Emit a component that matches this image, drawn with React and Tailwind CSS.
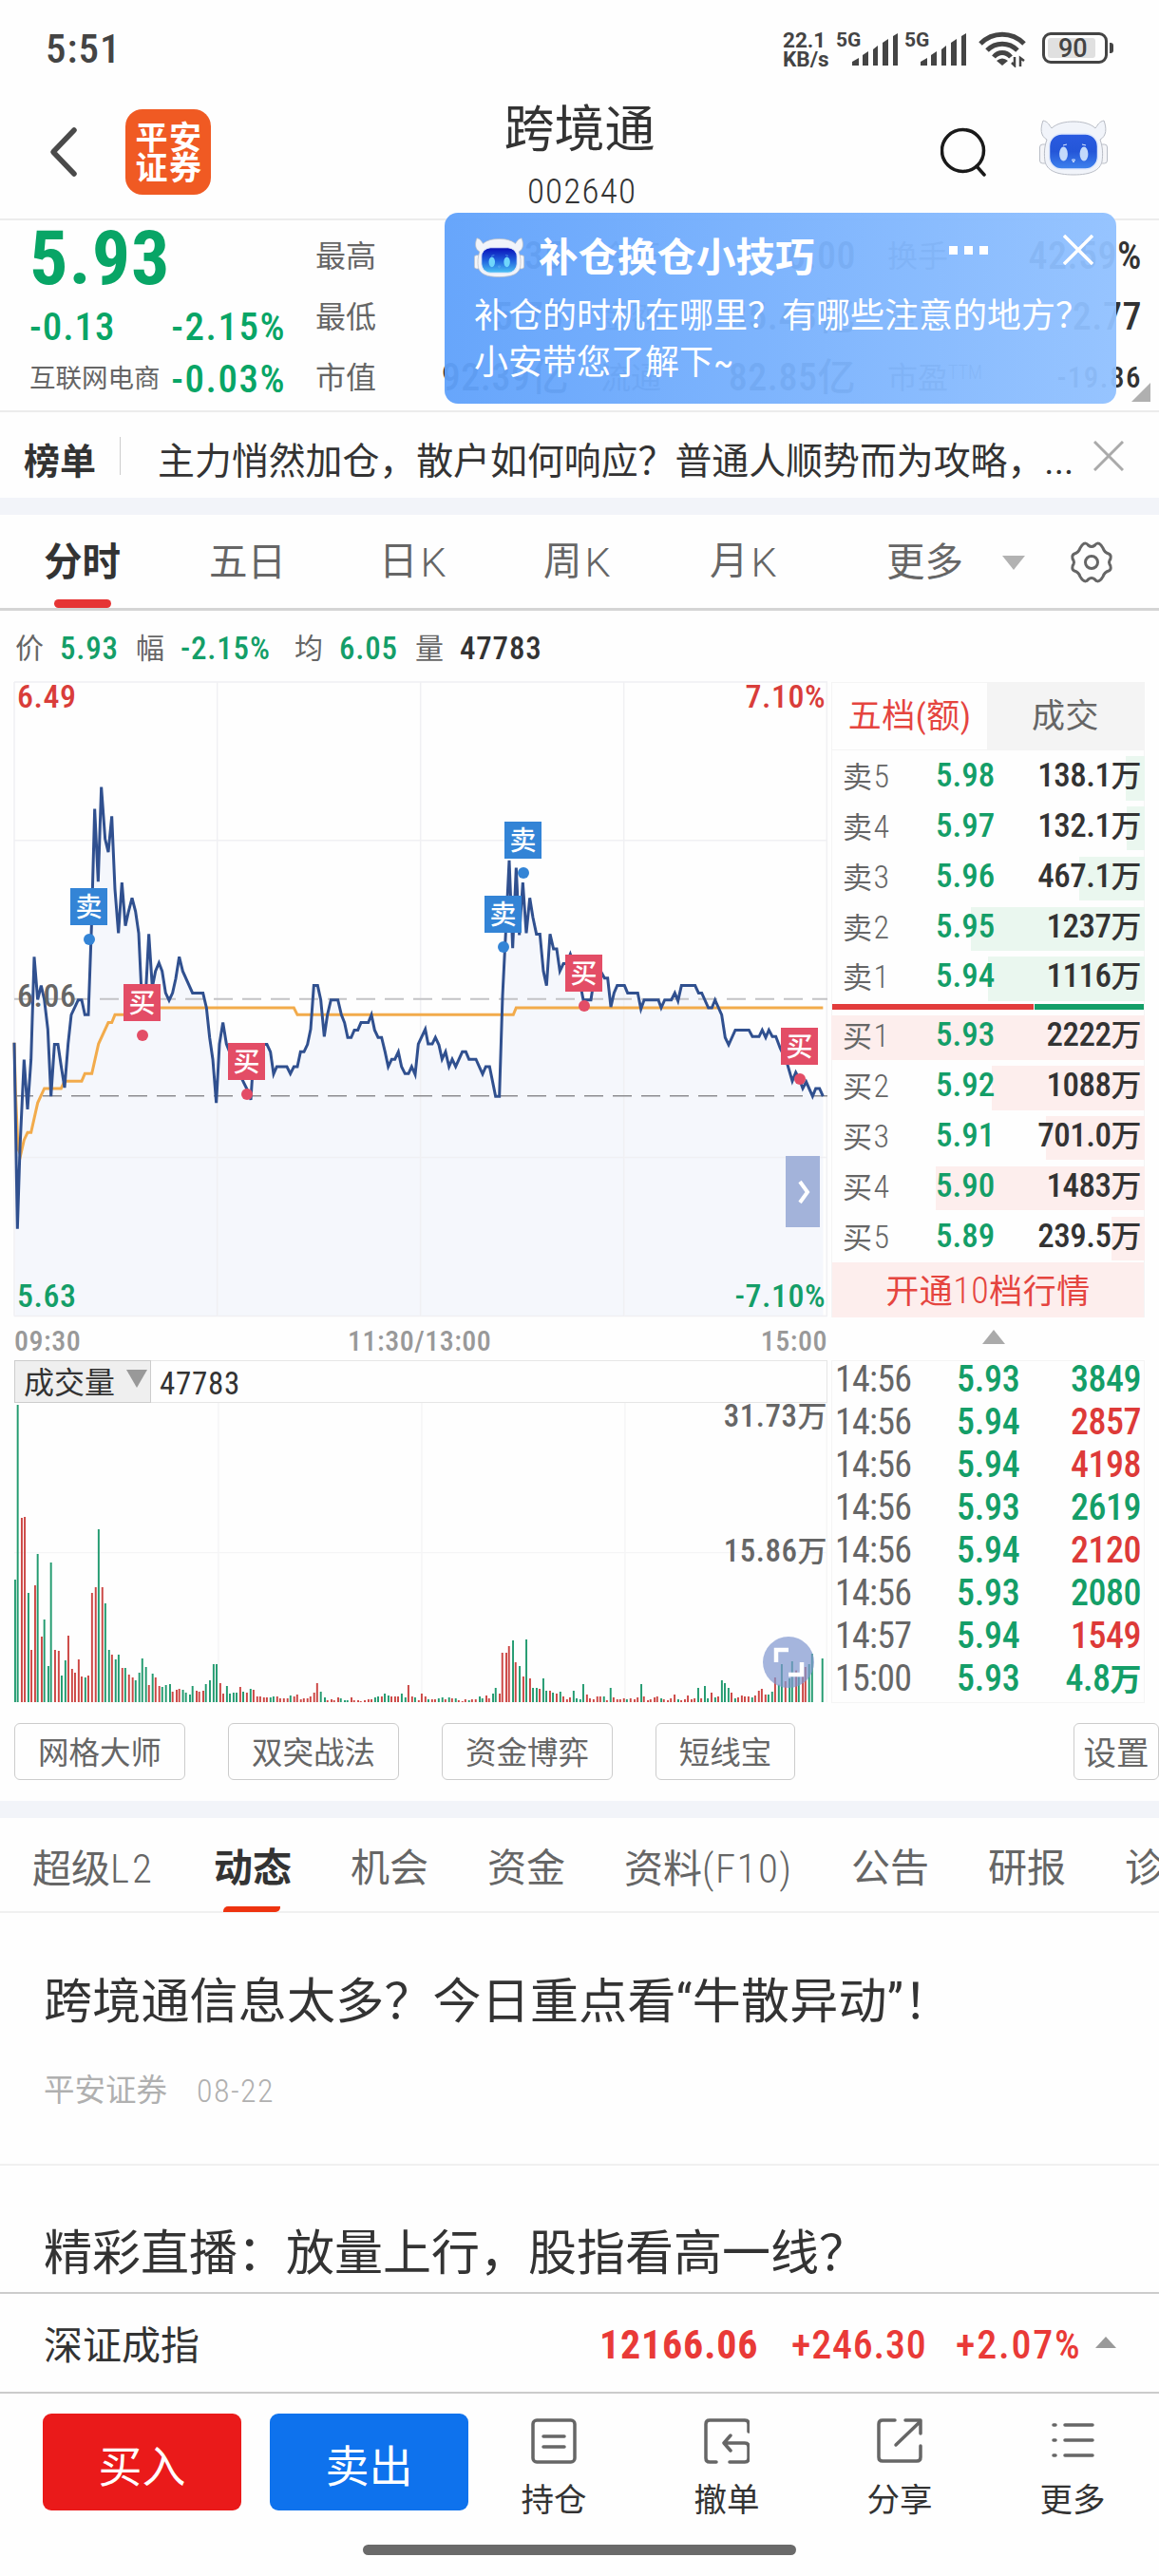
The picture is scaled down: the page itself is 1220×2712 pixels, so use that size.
const PRICE_LINE =
  '46,867 56,1294 64,1110 77,906 88,1020 99,905 109,670 120,768 131,736 141,768 152,836 162,990 173,871 184,871 194,920 205,970 216,870 226,803 248,769 259,769 269,803 280,803 290,600 300,331 311,498 321,281 333,400 343,430 354,348 364,515 375,616 386,500 397,599 407,566 418,535 429,566 439,616 449,770 460,770 471,618 482,740 492,703 503,684 513,703 524,753 535,770 546,753 556,720 567,670 578,703 609,753 642,753 653,787 663,855 673,905 684,1005 694,870 705,821 716,870 727,890 740,905 765,950 782,975 793,998 800,920 820,871 844,871 855,888 865,939 875,922 907,922 918,938 929,922 940,922 950,888 961,888 972,871 982,836 992,736 1004,736 1014,769 1025,853 1035,803 1046,769 1068,769 1079,803 1089,821 1099,855 1110,855 1120,838 1131,838 1141,821 1164,821 1174,803 1184,838 1195,855 1206,855 1217,888 1227,922 1238,905 1248,905 1259,888 1269,922 1280,938 1291,938 1301,922 1312,940 1322,870 1344,836 1353,870 1366,870 1376,855 1387,872 1397,905 1408,888 1419,922 1429,905 1440,922 1461,888 1472,888 1482,905 1504,905 1525,939 1535,922 1547,922 1566,990 1578,990 1588,760 1599,600 1609,449 1620,650 1631,466 1641,620 1652,500 1663,616 1674,535 1684,580 1695,618 1706,618 1717,703 1727,736 1738,618 1749,652 1759,652 1769,703 1780,686 1790,686 1802,664 1815,690 1830,720 1843,769 1867,769 1872,745 1885,700 1898,703 1910,719 1920,719 1930,785 1940,753 1950,736 1973,736 1983,753 2015,753 2025,790 2035,769 2080,769 2089,787 2100,769 2121,769 2132,753 2142,771 2153,736 2196,736 2207,753 2217,753 2238,787 2249,787 2259,769 2280,803 2291,855 2302,872 2323,838 2366,838 2377,853 2398,853 2408,838 2419,855 2429,838 2440,853 2451,853 2465,880 2485,910 2503,955 2514,935 2525,950 2536,972 2547,957 2567,990 2577,972 2589,972 2600,990'

const AVG_LINE =
  '46,867 50,980 58,1110 66,1125 77,1090 88,1073 99,1073 120,1005 141,972 194,972 205,955 259,955 269,938 291,938 312,870 343,821 354,821 364,803 395,803 500,787 929,787 940,803 1622,803 1631,787 2600,787'

// x height, g = down, r = up
const VOLUME =
  '41 387g,48 939g,59 582r,67 585r,77 345g,85 165r,95 369r,102 468g,113 207r,120 261g,131 114g,138 441g,149 165r,159 162r,167 84g,177 132g,185 210r,195 105r,203 93r,213 135r,221 81r,231 78g,239 84r,249 345r,259 363r,267 546g,277 363r,285 312g,295 165g,303 150r,313 135g,321 150g,331 108r,339 108g,349 87r,359 78r,367 69g,377 93g,385 138g,395 111g,403 54r,413 90g,421 78r,431 51r,439 48g,449 54g,460 57g,467 33r,478 39r,485 42r,495 39g,503 30g,514 24g,521 51g,532 36r,539 33r,550 36r,557 57g,568 69g,578 120g,586 120g,596 60r,604 27r,614 51g,622 27g,632 30g,640 30g,650 48r,658 33g,668 30r,678 42g,686 39r,696 18r,704 18r,714 15r,722 15r,732 15g,740 18g,750 18r,758 12r,768 12r,778 12r,786 21g,796 18r,804 24r,814 9r,822 12r,832 12r,840 18r,850 30r,858 60r,868 33g,879 15g,886 6r,897 9r,904 6r,915 15r,922 12g,933 6g,940 6g,951 15r,958 6r,969 6r,976 3r,987 6r,997 9r,1005 9r,1015 15g,1023 18g,1033 18r,1041 27g,1051 21g,1059 18r,1069 18r,1077 18r,1087 27g,1097 15g,1105 54r,1115 18r,1123 15g,1133 6r,1141 27r,1151 18r,1159 9g,1169 9r,1177 9r,1187 12g,1197 15g,1205 9r,1215 15g,1223 12r,1233 12g,1241 6r,1251 3r,1259 9r,1269 6g,1277 9r,1287 9r,1298 18g,1305 12g,1316 21r,1323 12r,1334 27g,1341 45g,1352 27r,1359 156r,1370 156r,1377 177r,1388 195g,1395 126r,1406 114g,1416 81r,1424 198g,1434 75r,1442 45g,1452 45g,1460 42r,1470 75g,1478 36g,1488 36r,1496 30g,1506 27r,1516 33g,1524 18r,1534 9r,1542 15r,1552 36g,1560 12g,1570 9g,1578 57g,1588 24r,1596 12r,1606 9r,1616 18r,1624 18r,1634 18g,1642 6r,1652 45g,1660 15r,1670 9r,1678 9r,1688 12r,1696 9g,1706 12r,1717 9r,1725 15r,1735 57g,1742 18r,1753 6r,1760 9r,1771 15r,1778 18r,1789 12g,1796 9r,1807 6r,1815 12r,1825 24r,1835 9g,1843 6r,1853 9r,1861 21r,1871 9r,1879 12r,1889 45g,1897 12r,1907 51g,1915 12g,1925 30r,1935 15g,1943 18r,1953 69g,1961 60g,1971 45g,1979 30r,1989 12g,1997 15r,2007 21r,2015 18r,2025 18r,2035 15g,2043 21r,2053 36r,2061 42r,2071 24r,2079 24g,2089 33g,2097 78r,2107 55g,2115 120g,2125 66r,2136 75g,2143 129g,2154 100r,2161 80g,2172 111r,2179 111r,2189 120g,2197 153g,2225 138g'

const bars = VOLUME.split(',').map((s) => {
  const [x, h] = s.split(' ')
  return { x: Number(x), h: parseInt(h, 10), up: h.endsWith('r') }
})

const trades = [
  { side: '卖', x: 59, y: 217 },
  { side: '买', x: 115, y: 318 },
  { side: '买', x: 225, y: 380 },
  { side: '卖', x: 495, y: 225 },
  { side: '卖', x: 516, y: 147 },
  { side: '买', x: 580, y: 287 },
  { side: '买', x: 807, y: 364 },
]

const asks = [
  ['卖5', '5.98', '138.1万', 20],
  ['卖4', '5.97', '132.1万', 19],
  ['卖3', '5.96', '467.1万', 69],
  ['卖2', '5.95', '1237万', 183],
  ['卖1', '5.94', '1116万', 165],
]

const bids = [
  ['买1', '5.93', '2222万', 330],
  ['买2', '5.92', '1088万', 161],
  ['买3', '5.91', '701.0万', 104],
  ['买4', '5.90', '1483万', 220],
  ['买5', '5.89', '239.5万', 35],
]

const ticks = [
  ['14:56', '5.93', '3849', 'g'],
  ['14:56', '5.94', '2857', 'r'],
  ['14:56', '5.94', '4198', 'r'],
  ['14:56', '5.93', '2619', 'g'],
  ['14:56', '5.94', '2120', 'r'],
  ['14:56', '5.93', '2080', 'g'],
  ['14:57', '5.94', '1549', 'r'],
  ['15:00', '5.93', '4.8万', 'g'],
]

function Robot({ className, dark }) {
  return (
    <svg viewBox="0 0 72 60" className={className} preserveAspectRatio="none">
      <defs>
        <linearGradient id={dark ? 'faceDark' : 'face'} x1="0" y1="0" x2="0" y2="1">
          <stop offset="0" stopColor={dark ? '#0a0fb8' : '#2a5be0'} />
          <stop offset="0.5" stopColor={dark ? '#1f5fdc' : '#2456d8'} />
          <stop offset="1" stopColor={dark ? '#4cc3f5' : '#3f83ee'} />
        </linearGradient>
      </defs>
      <rect x="0.5" y="26" width="8" height="20" rx="3" fill="#f4f5f8" stroke="#b9bdc6" />
      <rect x="63.5" y="26" width="8" height="20" rx="3" fill="#f4f5f8" stroke="#b9bdc6" />
      <path
        d="M4 1c-3 8-3 16 4 20c-3 8-3 16-2 23c2 9 11 14 30 14s28-5 30-14c1-7 1-15-2-23c7-4 7-12 4-20c-5 1-6 4-9 8C54 4 45 2 36 2S18 4 13 9C10 5 9 2 4 1z"
        fill="#f1f4fa"
        stroke="#b9bdc6"
      />
      <rect x="10.5" y="15" width="51" height="37" rx="13" fill={dark ? 'url(#faceDark)' : 'url(#face)'} stroke="#dfe8fb" strokeWidth="1.5" />
      <ellipse cx="25.5" cy="36" rx="4.4" ry="7.5" fill={dark ? '#6fd6fb' : '#c3dafb'} />
      <ellipse cx="47" cy="36" rx="4.4" ry="7.5" fill={dark ? '#6fd6fb' : '#c3dafb'} />
      <path d="M25 27l4-1M45 26l4 1M34.500 42h3l-1.500 3z" stroke={dark ? '#5aa8f0' : '#dce9fd'} fill="none" />
    </svg>
  )
}

function Signal() {
  return (
    <div className="relative w-[66px] h-[36px]">
      <span className="absolute left-0 top-[-1px] text-[21px] leading-[20px] font-bold [font-stretch:100%]">5G</span>
      <svg viewBox="0 0 48 36" className="absolute left-[17px] top-[2px] w-[48px] h-[36px]" fill="#444">
        <path d="M0 34l0-4l7-4v8zM11 34V23l6-4v15zM22 34V17l5-4v21zM32 34V10l6-4v28zM43 34V3l5-3v34z" />
      </svg>
    </div>
  )
}

function StatusBar() {
  return (
    <div className="h-[100px] flex items-start justify-between pl-[48px] pr-[48px] pt-[32px] text-[#444]">
      <span className="text-[43px] leading-[38px] tracking-[1px] font-medium">5:51</span>
      <div className="flex">
        <div className="w-[56px] text-[22.500px] leading-[20px] font-bold [font-stretch:100%]">
          <div>22.1</div>
          <div>KB/s</div>
        </div>
        <div className="flex gap-[6px] pt-[1px]">
          <Signal />
          <Signal />
        </div>
        <svg viewBox="0 0 50 38" className="w-[50px] h-[38px] ml-[12px] mt-px" fill="none" stroke="#444" strokeWidth="5">
          <path d="M2 13C15 0 35 0 48 13M9 20C18 11 32 11 41 20M16 27C21 21 29 21 34 27" />
          <path d="M25 36l-6-5q6-5 12 0z" fill="#444" stroke="none" />
          <path d="M38 27v9l-3-3M44 37v-9l4 3" strokeWidth="2.500" />
        </svg>
        <div className="flex items-center ml-[17px] mt-[2px] h-[33px]">
          <div className="w-[69px] h-[33px] rounded-[9px] border-[3.500px] border-[#444] p-[3px]">
            <div className="w-[50px] h-full rounded-[3px] bg-[#e0e0e0] pl-[11px] text-[27px] leading-[22px] whitespace-nowrap font-medium [font-stretch:100%]">90</div>
          </div>
          <div className="w-[4px] h-[11px] rounded-r-[3px] bg-[#444] ml-[2px]" />
        </div>
      </div>
    </div>
  )
}

function Header() {
  return (
    <header className="relative h-[132px] border-b-[2px] border-[#ececec]">
      <div className="flex items-center h-[120px] pl-[52px]">
        <svg viewBox="0 0 30 54" className="w-[30px] h-[54px]" fill="none" stroke="#4a4a4a" strokeWidth="5.500" strokeLinecap="round" strokeLinejoin="round">
          <path d="M26 4L4 27L26 50" />
        </svg>
        <div className="ml-[50px] w-[90px] h-[90px] rounded-[18px] bg-[#f05a23] text-white text-center text-[34px] leading-[32px] font-bold pt-[14px] pl-[2px] tracking-[1.500px]">
          <div>平安</div>
          <div>证券</div>
        </div>
        <div className="flex-1" />
        <svg viewBox="0 0 48 52" className="w-[48px] h-[52px]" fill="none" stroke="#1a1a1a" strokeWidth="3.500">
          <circle cx="23.500" cy="24.500" r="22" />
          <path d="M38 41l8 9" strokeLinecap="round" />
        </svg>
        <Robot className="w-[72px] h-[60px] ml-[56px] mr-[54px] -mt-[8px]" />
      </div>
      <div className="absolute inset-x-0 top-[9px] text-center text-[#333]">
        <div className="text-[53px] leading-[56px]">跨境通</div>
        <div className="text-[37px] leading-[37px] pt-[18px] pl-[5px] tracking-[1.200px] font-light">002640</div>
      </div>
    </header>
  )
}

function Quote() {
  return (
    <section className="relative h-[202px] border-b-[2px] border-[#ececec] flex text-[#666]">
      <div className="w-[302px] shrink-0 pl-[31px] text-[#08a566] font-medium">
        <div className="text-[80px] leading-[80px] font-bold tracking-[1px] h-[81px]">5.93</div>
        <div className="flex justify-between w-[270px] text-[41px] leading-[40px] mt-[11px] tracking-[1px]">
          <span>-0.13</span>
          <span className="tracking-[1.500px]">-2.15%</span>
        </div>
        <div className="flex justify-between items-center w-[270px] text-[41px] leading-[40px] mt-[15px] tracking-[1.500px]">
          <span className="text-[27.500px] font-normal tracking-normal text-[#666]">互联网电商</span>
          <span>-0.03%</span>
        </div>
      </div>
      <div className="grid grid-cols-[66px_205px_29px_66px_203px_33px_66px_202px] grid-rows-3 h-[198px] pt-[6px] ml-[30px] text-[32px] leading-[40px] items-center whitespace-nowrap [&>b]:text-right [&>b]:font-medium [&>b]:text-[#333] [&>b]:text-[40px] [&>b]:tracking-[0.500px]">
        <span>最高</span><b className="pr-[10px]">6.35</b><i /><span>今开</span><b>6.00</b><i /><span>换手</span><b>42.59%</b>
        <span>最低</span><b className="pr-[10px]">5.75</b><i /><span>金额</span><b>35.43亿</b><i /><span>量比</span><b>2.77</b>
        <span>市值</span><b className="pr-[4px]">92.39亿</b><i /><span>流通</span><b>82.85亿</b><i />
        <span>市盈<sup className="text-[20px] font-light">TTM</sup></span><b className="!text-[31px] !tracking-[1.500px]">-19.86</b>
      </div>
      <svg viewBox="0 0 20 20" className="absolute right-[9px] bottom-[9px] w-[20px] h-[20px]" fill="#b0b0b0">
        <path d="M20 0V20H0z" />
      </svg>

      {/* 浮层提示 */}
      <div className="absolute left-[468px] -top-[8px] w-[707px] h-[201px] rounded-[14px] bg-gradient-to-r from-[#5fa1fb]/95 to-[#91c1ff]/95 text-white">
        <div className="flex items-center pl-[31px] pt-[23px]">
          <Robot dark className="w-[53px] h-[43px]" />
          <span className="ml-[15px] text-[41.500px] leading-[46px] font-bold pt-[2px]">补仓换仓小技巧</span>
          <div className="flex gap-[7px] ml-[141px] -mt-[15px]">
            <i className="w-[9px] h-[9px] bg-white" />
            <i className="w-[9px] h-[9px] bg-white" />
            <i className="w-[9px] h-[9px] bg-white" />
          </div>
          <svg viewBox="0 0 32 32" className="w-[32px] h-[32px] ml-[79px] -mt-[16px]" stroke="#fff" strokeWidth="3.500">
            <path d="M1 1L31 31M31 1L1 31" />
          </svg>
        </div>
        <p className="pl-[31px] mt-[14px] text-[36px] leading-[49px] whitespace-nowrap">
          补仓的时机在哪里？有哪些注意的地方？<br />小安带您了解下~
        </p>
      </div>
    </section>
  )
}

function Tabs() {
  return (
    <div className="relative h-[101px] border-b-[3px] border-[#d4d4d4] flex items-center text-[40.500px] text-[#666] pl-[46px] pt-[2px]">
      <span className="w-[174px] font-bold text-[#333]">分时</span>
      <span className="w-[179px]">五日</span>
      <span className="w-[173px] flex gap-[3px]">日<span className="font-light text-[43px] [font-stretch:100%]">K</span></span>
      <span className="w-[175px] flex gap-[3px]">周<span className="font-light text-[43px] [font-stretch:100%]">K</span></span>
      <span className="w-[186px] flex gap-[3px]">月<span className="font-light text-[43px] [font-stretch:100%]">K</span></span>
      <span className="w-[122px]">更多</span>
      <svg viewBox="0 0 24 15" className="w-[24px] h-[15px]" fill="#b2b2b2"><path d="M0 0H24L12 15z" /></svg>
      <svg viewBox="0 0 44 44" className="w-[44px] h-[44px] ml-[48px]" fill="none" stroke="#666" strokeWidth="3" strokeLinejoin="round">
        <path d="M12 4C15 1 17 2 18.500 4Q22 7 25.500 4C27 2 29 1 32 4L34 7C35 10 36 12 40 13C43 14 42.500 18 41 20Q40 22 41 24C42.500 26 43 30 40 31C36 32 35 34 34 37L32 40C29 43 27 42 25.500 40Q22 37 18.500 40C17 42 15 43 12 40L10 37C9 34 8 32 4 31C1 30 1.500 26 3 24Q4 22 3 20C1.500 18 1 14 4 13C8 12 9 10 10 7z" />
        <circle cx="22" cy="22" r="6.500" />
      </svg>
      <div className="absolute left-[57px] bottom-0 w-[60px] h-[9px] rounded-[5px] bg-[#e63535]" />
    </div>
  )
}

function PriceChart() {
  return (
    <div className="relative w-[856px] h-[669px] text-[34px] leading-[34px] font-medium tracking-[0.500px]">
      <svg viewBox="46 40 2568 1457" preserveAspectRatio="none" className="w-full h-full block overflow-visible" fill="none">
        <path d={'M' + PRICE_LINE.replaceAll(' ', 'L') + 'L2600,1494L50,1494z'} fill="#f5f7fc" />
        <path d="M46 40H2614M46 403H2614M46 1130H2614M46 1494H2614M46 40V1494M687 40V1494M1329 40V1494M1971 40V1494M2612 40V1494" stroke="#f0f0f3" strokeWidth="1.500" vectorEffect="non-scaling-stroke" />
        <path d="M46 767H2614" stroke="#c3c3c6" strokeWidth="2" strokeDasharray="20 10" vectorEffect="non-scaling-stroke" />
        <path d="M46 989H2614" stroke="#8c8c90" strokeWidth="1.700" strokeDasharray="20 10" vectorEffect="non-scaling-stroke" />
        <polyline points={AVG_LINE} stroke="#f2ab4b" strokeWidth="3" vectorEffect="non-scaling-stroke" />
        <polyline points={PRICE_LINE} stroke="#30508f" strokeWidth="3" vectorEffect="non-scaling-stroke" />
      </svg>
      <span className="absolute left-[3px] top-[-2px] text-[#d93d3a]">6.49</span>
      <span className="absolute right-[2px] top-[-2px] text-[#d93d3a]">7.10%</span>
      <span className="absolute left-[3px] top-[313px] text-[#666]">6.06</span>
      <span className="absolute left-[3px] top-[629px] text-[#149e68]">5.63</span>
      <span className="absolute right-[2px] top-[629px] text-[#149e68]">-7.10%</span>
      {trades.map((t, i) => (
        <div key={i} className="absolute" style={{ left: t.x, top: t.y }}>
          <div className={`w-[39px] h-[39px] text-center text-white text-[28px] leading-[41px] tracking-normal font-medium ${t.side === '卖' ? 'bg-[#3384d6]' : 'bg-[#e34d66]'}`}>
            {t.side}
          </div>
          <div className={`w-[12px] h-[12px] rounded-full mx-auto mt-[9px] ${t.side === '卖' ? 'bg-[#3384d6]' : 'bg-[#e34d66]'}`} />
        </div>
      ))}
      <div className="absolute left-[812px] top-[499px] w-[36px] h-[75px] bg-[#a3b3da] flex items-center justify-center pl-[3px]">
        <svg viewBox="0 0 14 26" className="w-[14px] h-[26px]" fill="none" stroke="#fff" strokeWidth="4"><path d="M2 2L10 13L2 24" /></svg>
      </div>
    </div>
  )
}

function BookRow({ row, tone }) {
  const [name, price, amount, width] = row
  return (
    <div className="relative h-[52.850px] flex text-[35px] leading-[42px]">
      <div className={`absolute right-[-1px] top-0 h-[46.500px] ${tone}`} style={{ width }} />
      <span className="relative w-[109px] pl-[11px] text-[31px] text-[#666]">{name[0]}<span className="text-[34px] font-light ml-px">{name[1]}</span></span>
      <span className="relative w-[80px] font-medium text-[#149e68] tracking-normal">{price}</span>
      <span className="relative flex-1 text-right pr-[3px] font-medium tracking-[-0.500px] text-[#333]">
        {amount.slice(0, -1)}<span className="text-[32px] font-medium">万</span>
      </span>
    </div>
  )
}

function OrderBook() {
  return (
    <div className="w-[330px] h-[669px] tracking-[0.500px] border-x border-[#f4f4f4]">
      <div className="flex h-[72px] border-y border-[#f4f4f4] text-[35px] leading-[71px] text-center">
        <div className="w-[163px] text-[#e5453f]">五档(额)</div>
        <div className="flex-1 bg-[#f4f4f4] text-[#666]">成交</div>
      </div>
      <div className="pt-[6px]">{asks.map((r) => <BookRow key={r[0]} row={r} tone="bg-[#eaf7ef]" />)}</div>
      <div className="flex gap-px h-[6px] -mt-[3px]">
        <div className="w-[212px] bg-[#e23c3c]" />
        <div className="flex-1 bg-[#149e68]" />
      </div>
      <div className="pt-[6px]">{bids.map((r) => <BookRow key={r[0]} row={r} tone="bg-[#fdeeed]" />)}</div>
      <div className="h-[58px] -mt-[4px] bg-[#fdeeed] text-[#e5453f] text-[35px] leading-[61px] text-center">
        开通<span className="font-light text-[38px]">10</span>档行情
      </div>
    </div>
  )
}

function VolumeChart() {
  return (
    <div className="w-[856px] h-[361px] text-[#666]">
      <div className="flex h-[45px] border-y-[1.500px] border-r border-[#e6e6e6]">
        <div className="w-[144px] h-[45px] -mt-px bg-[#efefef] border border-[#ccc] flex items-center text-[#333]">
          <span className="pl-[9px] pt-[2px] text-[32px]">成交量</span>
          <svg viewBox="0 0 22 19" className="w-[22px] h-[19px] ml-auto mr-[3px] -mt-[6px]" fill="#999"><path d="M0 0H22L11 19z" /></svg>
        </div>
        <span className="pl-[9px] text-[33px] leading-[48px] tracking-[0.700px] text-[#333]">47783</span>
      </div>
      <div className="relative h-[315px] text-[33px] leading-[34px] tracking-[0.500px] font-medium">
        <svg viewBox="38.6 291 2200 945" preserveAspectRatio="none" className="w-full h-full block">
          <path d="M38 764H2238M591 291V1236M1141 291V1236M1691 291V1236M2237 291V1236" stroke="#f5f5f6" strokeWidth="4" />
          {bars.map((b) => (
            <rect key={b.x} x={b.x - 2.5} y={1236 - b.h} width="5" height={b.h} fill={b.up ? '#cc4744' : '#239b70'} />
          ))}
        </svg>
        <span className="absolute right-0 top-[-3px]">31.73<span className="text-[31px]">万</span></span>
        <span className="absolute right-0 top-[139px]">15.86<span className="text-[31px]">万</span></span>
        <div className="absolute left-[788px] top-[246px] w-[54px] h-[54px] rounded-full bg-[#7f96cf]/70">
          <svg viewBox="0 0 54 54" className="w-full h-full" fill="none" stroke="#fff" strokeWidth="4.500">
            <path d="M14 27V14H27M41 27V40H27" />
          </svg>
        </div>
      </div>
    </div>
  )
}

function Ticks() {
  return (
    <div className="w-[330px] h-[361px] border border-[#f4f4f4] text-[38px] leading-[38px]">
      {ticks.map(([time, price, vol, c], i) => (
        <div key={i} className="flex h-[45px] pl-[3px] pr-[3px]">
          <span className="w-[128px] tracking-[-0.700px] text-[#666]">{time}</span>
          <span className="text-[#149e68] font-medium tracking-[-0.300px]">{price}</span>
          <span className={`ml-auto font-medium tracking-[-0.500px] ${c === 'r' ? 'text-[#dd3a38]' : 'text-[#149e68]'}`}>
            {vol.replace('万', '')}
            {vol.endsWith('万') && <span className="text-[33px] font-bold">万</span>}
          </span>
        </div>
      ))}
    </div>
  )
}

function BottomItem({ label, children }) {
  return (
    <div className="w-[182px] flex flex-col items-center">
      <svg viewBox="0 0 48 48" className="w-[48px] h-[48px]" fill="none" stroke="#666" strokeWidth="3.500" strokeLinecap="round" strokeLinejoin="round">
        {children}
      </svg>
      <span className="text-[34.500px] leading-[40px] mt-[18px] text-[#333]">{label}</span>
    </div>
  )
}

export default function App() {
  return (
    <div className="w-[1220px] h-[2712px] overflow-hidden bg-[#fefefe] text-[#333] font-['Roboto','Noto_Sans_CJK_SC',sans-serif] [font-stretch:75%] leading-none">
      <StatusBar />
      <Header />
      <Quote />

      <div className="h-[90px] flex items-center pl-[25px] pt-[12px] text-[38.900px] whitespace-nowrap">
        <span className="font-bold text-[38px] w-[101px] pt-[2px]">榜单</span>
        <i className="w-px h-[40px] bg-[#ccc] -mt-[11px]" />
        <span className="pl-[39px] w-[1024px] pt-[2px]">主力悄然加仓，散户如何响应？普通人顺势而为攻略，...</span>
        <svg viewBox="0 0 32 32" className="w-[32px] h-[32px] -mt-[10px]" stroke="#aaa" strokeWidth="3"><path d="M1 1L31 31M31 1L1 31" /></svg>
      </div>
      <div className="h-[18px] bg-[#f2f4f9]" />
      <Tabs />

      <div className="h-[75px] flex items-center pl-[16px] pt-[4px] text-[30px] text-[#666] [&>b]:text-[33px] [&>b]:font-medium [&>b]:tracking-[0.800px] [&>b]:text-[#149e68]">
        <span className="w-[47px]">价</span><b className="w-[80px]">5.93</b>
        <span className="w-[47px]">幅</span><b className="w-[120px]">-2.15%</b>
        <span className="w-[47px]">均</span><b className="w-[80px]">6.05</b>
        <span className="w-[47px]">量</span><b className="!text-[#333]">47783</b>
      </div>

      <div className="flex gap-[4px] pl-[15px]">
        <PriceChart />
        <OrderBook />
      </div>
      <div className="flex h-[45px] items-center pl-[15px] pt-[4px] text-[30px] text-[#999] font-medium tracking-[0.500px]">
        <span className="w-[351px]">09:30</span>
        <span className="flex-1">11:30/13:00</span>
        <span>15:00</span>
        <svg viewBox="0 0 24 15" className="w-[24px] h-[15px] ml-[163px] mr-[162px] -mt-[8px]" fill="#aaa"><path d="M12 0L24 15H0z" /></svg>
      </div>
      <div className="flex gap-[4px] pl-[15px]">
        <VolumeChart />
        <Ticks />
      </div>

      <div className="flex pl-[15px] pt-[21px] h-[103px] text-[32.500px] leading-[62px] text-[#666] text-center [&>span]:h-[60px] [&>span]:border-[1.500px] [&>span]:border-[#ccc] [&>span]:rounded-[6px]">
        <span className="w-[180px] mr-[45px]">网格大师</span>
        <span className="w-[180px] mr-[45px]">双突战法</span>
        <span className="w-[180px] mr-[45px]">资金博弈</span>
        <span className="w-[147px] mr-[293px]">短线宝</span>
        <span className="w-[90px] text-[34.500px]">设置</span>
      </div>
      <div className="h-[18px] bg-[#f2f4f9]" />

      <div className="h-[100px] border-b-[2px] border-[#f0f0f0] flex gap-[62px] pl-[34px] pt-[31px] text-[41px] leading-[45px] text-[#666] whitespace-nowrap">
        <span className="w-[134px]">超级<span className="font-light text-[43px] tracking-[3px]">L2</span></span>
        <span className="relative font-bold text-[#333]">
          动态
          <i className="absolute left-[10px] top-[62px] w-[60px] h-[6px] rounded-tl-[5px] rounded-br-[5px] bg-[#ee330f]" />
        </span>
        <span>机会</span>
        <span>资金</span>
        <span className="w-[177px]">资料<span className="font-light text-[43px] tracking-[1.500px]">(F10)</span></span>
        <span>公告</span>
        <span>研报</span>
        <span>诊</span>
      </div>

      <div className="h-[266px] border-b-[2px] border-[#f0f0f0] pl-[46px] pt-[67px]">
        <h2 className="text-[51px] leading-[54px] tracking-[0.200px] whitespace-nowrap">跨境通信息太多？今日重点看“牛散异动”！</h2>
        <div className="flex gap-[31px] mt-[48px] text-[32.500px] leading-[36px] text-[#b0b0b0]">
          <span>平安证券</span>
          <span className="text-[34px] font-light tracking-[1.400px]">08-22</span>
        </div>
      </div>
      <div className="h-[133px] pl-[46px] pt-[66px]">
        <h2 className="text-[51px] leading-[54px] whitespace-nowrap">精彩直播：放量上行，股指看高一线？</h2>
      </div>

      <div className="h-[107px] border-y-[2px] border-[#ccc] flex items-center pl-[46px] pt-[4px] text-[42px] font-medium text-[#e93a37]">
        <span className="text-[41px] font-normal text-[#333] flex-1 pt-[4px]">深证成指</span>
        <span className="w-[202px] font-bold tracking-[0.800px]">12166.06</span>
        <span className="w-[173px] tracking-[0.800px]">+246.30</span>
        <span className="w-[147px] tracking-[1.800px]">+2.07%</span>
        <svg viewBox="0 0 22 12" className="w-[22px] h-[12px] mr-[45px] -mt-[6px]" fill="#999"><path d="M11 0L22 12H0z" /></svg>
      </div>

      <div className="flex pl-[45px] pt-[21px]">
        <div className="w-[210px] h-[102px] rounded-[9px] bg-[#ea1a1a] text-white text-[46px] leading-[112px] text-center">买入</div>
        <div className="w-[210px] h-[102px] rounded-[9px] bg-[#0e72ed] text-white text-[46px] leading-[112px] text-center ml-[30px]">卖出</div>
        <div className="flex -ml-[1px] pt-[5px]">
          <BottomItem label="持仓">
            <rect x="2" y="2" width="44" height="44" rx="4" />
            <path d="M13 19H35M13 30H35" />
          </BottomItem>
          <BottomItem label="撤单">
            <path d="M47 14V6q0-4-4-4H6q-4 0-4 4V42q0 4 4 4H13M27 46H43q4 0 4-4V30q0-4-4-4H21M28 18L21 26L28 34" />
          </BottomItem>
          <BottomItem label="分享">
            <path d="M19 2H6q-4 0-4 4V41q0 4 4 4H42q4 0 4-4V29M30 2H46V16M45 4L20 28" />
          </BottomItem>
          <BottomItem label="更多">
            <path d="M4 7H6M16 7H45M4 23H6M16 23H45M4 39H6M16 39H45" />
          </BottomItem>
        </div>
      </div>
      <div className="w-[456px] h-[11px] rounded-full bg-[#6a6a6a] mx-auto mt-[27px]" />
    </div>
  )
}
